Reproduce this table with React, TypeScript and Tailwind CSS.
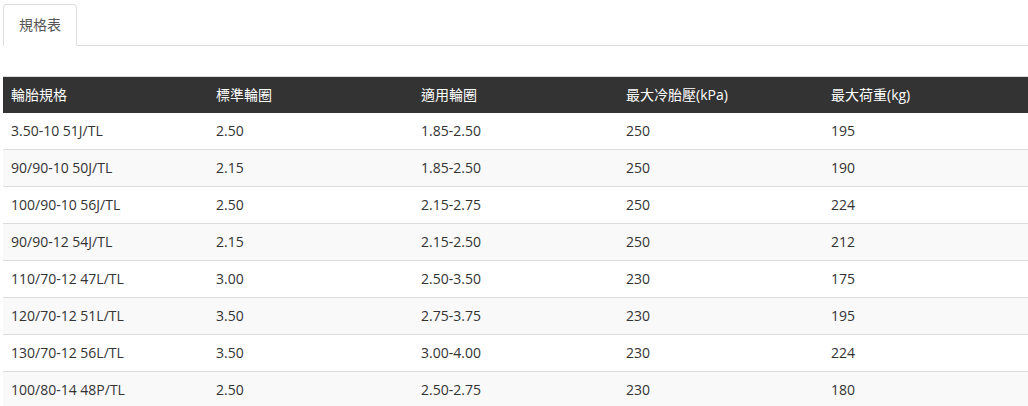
import React from 'react';

const headers = ['輪胎規格', '標準輪圈', '適用輪圈', '最大冷胎壓(kPa)', '最大荷重(kg)'];

const rows = [
  ['3.50-10 51J/TL', '2.50', '1.85-2.50', '250', '195'],
  ['90/90-10 50J/TL', '2.15', '1.85-2.50', '250', '190'],
  ['100/90-10 56J/TL', '2.50', '2.15-2.75', '250', '224'],
  ['90/90-12 54J/TL', '2.15', '2.15-2.50', '250', '212'],
  ['110/70-12 47L/TL', '3.00', '2.50-3.50', '230', '175'],
  ['120/70-12 51L/TL', '3.50', '2.75-3.75', '230', '195'],
  ['130/70-12 56L/TL', '3.50', '3.00-4.00', '230', '224'],
  ['100/80-14 48P/TL', '2.50', '2.50-2.75', '230', '180'],
];

export default function App() {
  return (
    <div
      className="bg-white pl-[3px] pt-[4px] text-[14px] text-[#333]"
      style={{ fontFamily: '"Open Sans", "Noto Sans CJK TC", sans-serif' }}
    >
      {/* Tabs */}
      <ul className="flex border-b border-[#ddd]">
        <li className="-mb-px">
          <span className="block rounded-t border border-[#ddd] border-b-white bg-white px-[15px] py-[10px] leading-5 text-[#555]">
            規格表
          </span>
        </li>
      </ul>

      {/* Spec table */}
      <table className="mt-[30px] w-full table-fixed border-collapse">
        <thead>
          <tr className="border-t border-[#ddd] bg-[#333] text-white">
            {headers.map(h => (
              <th key={h} className="px-2 py-2 text-left font-normal leading-5">
                {h}
              </th>
            ))}
          </tr>
        </thead>
        <tbody>
          {rows.map((r, i) => (
            <tr key={i} className={`border-b border-[#ddd] ${i % 2 === 1 ? 'bg-[#f9f9f9]' : 'bg-white'}`}>
              {r.map((c, j) => (
                <td key={j} className="px-2 py-2 leading-5">
                  {c}
                </td>
              ))}
            </tr>
          ))}
        </tbody>
      </table>
    </div>
  );
}
